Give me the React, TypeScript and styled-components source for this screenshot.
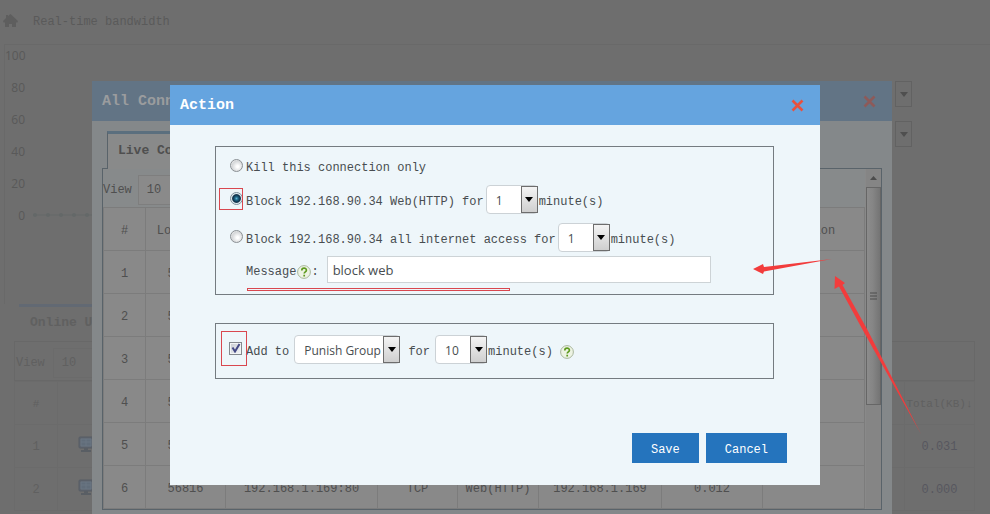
import React, { useState } from "react";
import styled, { createGlobalStyle, css } from "styled-components";

const MONO = '"Liberation Mono", "Courier New", monospace';
const SANS = '"Open Sans", "Noto Sans", sans-serif';

const GlobalStyle = createGlobalStyle`
  *, *::before, *::after { box-sizing: border-box; }
  body { margin: 0; background: #6e6e6e; font: 12px/16px ${MONO}; }
  button, input, select { font: inherit; color: inherit; }
`;

const Screen = styled.div`
  position: relative;
  height: 100vh;
  overflow: hidden;
  color: #606060;
`;

/* ---------- dashboard ---------- */

const Dashboard = styled.main`
  display: flex;
  flex-direction: column;
`;

const DashboardHeader = styled.header`
  display: flex;
  align-items: center;
  gap: 14px;
  height: 44px;
  padding-left: 2px;
`;

const DashboardTitle = styled.h1`
  margin: 0;
  font-size: 12px;
  font-weight: 400;
  line-height: 16px;
  color: #5a5a5a;
`;

const ChartCard = styled.section`
  display: flex;
  justify-content: space-between;
  height: 260px;
  margin-left: 4px;
  border-top: 1px solid #696969;
  border-left: 1px solid #696969;
`;

const Axis = styled.ol`
  display: flex;
  flex-direction: column;
  gap: 16px;
  width: 20px;
  margin: 3px 0 0;
  padding: 0;
  list-style: none;
  text-align: right;
  font-family: ${SANS};
  color: #595959;
`;

const Plot = styled.svg`
  flex: 1;
  height: 12px;
  margin: 164px 0 0 8px;
`;

const ChartFilters = styled.div`
  display: flex;
  flex-direction: column;
  gap: 14px;
  width: 95px;
  padding-top: 36px;
`;

const GhostButton = styled.button`
  width: 17px;
  height: 26px;
  padding: 0;
  color: #4f4f4f;
  background: #6e6e6e;
  border: 1px solid #626262;
  line-height: 0;
`;

const OnlineCard = styled.section`
  margin: 0 15px 0 14px;
`;

const DimTab = styled.h2`
  width: 180px;
  height: 37px;
  margin: 0 0 0 5px;
  padding: 8px 11px;
  border-top: 3px solid #626973;
  font-size: 13px;
  line-height: 16px;
`;

const DimToolbar = styled.div`
  display: flex;
  align-items: center;
  gap: 8px;
  height: 40px;
  padding: 4px 1px 0;
  border: 1px solid #686868;
`;

const DimTable = styled.table`
  width: 100%;
  table-layout: fixed;
  border-collapse: collapse;
  text-align: center;
  white-space: nowrap;

  th, td {
    height: 43px;
    padding: 2px 0 0;
    border: 1px solid #6b6b6b;
    font-weight: 400;
  }
  th { font-size: 11px; }
  td:last-child { color: #57575f; }
`;

const Col = styled.col<{ $w?: number }>`
  ${({ $w }) => $w && css`width: ${$w}px;`}
`;

/* ---------- modal windows ---------- */

const Layer = styled.div<{ $top: number; $right?: number }>`
  position: absolute;
  inset: 0;
  display: flex;
  justify-content: center;
  align-items: flex-start;
  padding: ${({ $top }) => $top}px ${({ $right }) => $right || 0}px 0 0;
`;

const Window = styled.section<{ $width: number; $dim?: boolean }>`
  position: relative;
  width: 100%;
  max-width: ${({ $width }) => $width}px;
  color: ${({ $dim }) => ($dim ? "#4f4f4f" : "#484d50")};
  background: ${({ $dim }) => ($dim ? "#84888a" : "#eef6fa")};
`;

const TitleBar = styled.header<{ $dim?: boolean }>`
  display: flex;
  align-items: center;
  justify-content: space-between;
  height: 40px;
  padding: 0 16px 0 10px;
  color: ${({ $dim }) => ($dim ? "#9a9c9e" : "#fff")};
  background: ${({ $dim }) => ($dim ? "#627485" : "#65a4df")};
`;

const WindowTitle = styled.h2`
  margin: 0;
  padding-top: 2px;
  font-size: 15px;
  line-height: 20px;
`;

const CloseButton = styled.button<{ $dim?: boolean }>`
  display: flex;
  padding: 0;
  border: 0;
  background: none;
  color: ${({ $dim }) => ($dim ? "#8d5a59" : "#e8513f")};
`;

const ConnectionsBody = styled.div`
  padding: 10px;
`;

const LiveTab = styled.h3`
  position: relative;
  width: 180px;
  height: 38px;
  margin: 0 0 -1px 5px;
  padding: 9px 10px;
  font-size: 13px;
  background: #898a8a;
  border: 1px solid #59636a;
  border-top: 3px solid #5b6f7e;
  border-bottom: 0;
`;

const LivePanel = styled.div`
  display: flex;
  border: 1px solid #59636a;
`;

const LiveContent = styled.div`
  flex: 1;
  padding-right: 1px;
  background: #898989;
`;

const LiveToolbar = styled.div`
  display: flex;
  align-items: center;
  gap: 6px;
  height: 38px;
  padding-top: 4px;
  background: #878a8b;
`;

const PageSize = styled.select<{ $faint?: boolean }>`
  appearance: none;
  width: 52px;
  height: 30px;
  padding: 0 8px;
  border: 1px solid ${({ $faint }) => ($faint ? "#6b6b6b" : "#7e7e7e")};
  background: ${({ $faint }) => ($faint ? "#6e6e6e" : "#8a8a8a")};
`;

const LiveTable = styled.table`
  width: 100%;
  table-layout: fixed;
  border-collapse: collapse;
  text-align: center;
  background: #898989;

  th, td {
    height: 43px;
    padding: 4px 0 0;
    border: 1px solid #7c7c7c;
    font-weight: 400;
  }
`;

const ScrollTrack = styled.div`
  display: flex;
  flex-direction: column;
  align-items: center;
  width: 15px;
  background: #858585;
  color: #4c4c4c;
`;

const ScrollUp = styled.button`
  width: 15px;
  height: 18px;
  padding: 0;
  border: 0;
  background: none;
  line-height: 0;
`;

const ScrollThumb = styled.div`
  display: flex;
  align-items: center;
  justify-content: center;
  width: 15px;
  height: 218px;
  border: 1px solid #666;
  background: linear-gradient(90deg, #8c8c8c, #858585 45%, #747474);
`;

/* ---------- action form ---------- */

const ActionForm = styled.form`
  padding: 21px 33px 22px 45px;
`;

const OptionGroup = styled.fieldset`
  display: flex;
  flex-direction: column;
  min-width: 0;
  margin: 0 13px 0 0;
  padding: 0 14px 11px;
  border: 1px solid #747b80;
`;

const PunishGroup = styled(OptionGroup)`
  margin-top: 28px;
  padding: 11px 13px 14px;
`;

const OptionRow = styled.div<{ $height: number; $after?: number }>`
  display: flex;
  align-items: center;
  height: ${({ $height }) => $height}px;
  margin-bottom: ${({ $after }) => $after || 0}px;
  white-space: pre;
`;

const Choice = styled.label`
  display: flex;
  align-items: center;
  gap: 4px;
`;

const Caption = styled.span`
  padding-top: 4px;
`;

const Marked = styled.span<{ $x: number; $top: number; $bottom: number }>`
  position: relative;
  display: flex;

  &::after {
    content: "";
    position: absolute;
    top: -${({ $top }) => $top}px;
    bottom: -${({ $bottom }) => $bottom}px;
    left: -${({ $x }) => $x}px;
    right: -${({ $x }) => ($x > 9 ? 1 : 5)}px;
    border: 1px solid #d9474f;
    pointer-events: none;
  }
`;

const Radio = styled.input`
  appearance: none;
  width: 13px;
  height: 13px;
  margin: 0 -1px 2px 0;
  border: 1px solid #8b9094;
  border-radius: 50%;
  background: radial-gradient(circle at 60% 60%, #fff 10%, #d4d6d8 60%, #f4f4f4 80%);

  &:checked {
    border-color: #7d8f9b;
    background: radial-gradient(circle at 50% 50%, #5fb4d6 0, #1c6384 22%, #0d2c45 50%, #dbe8ee 62%, #eef6fa 75%);
  }
`;

const Checkbox = styled.input`
  appearance: none;
  width: 13px;
  height: 13px;
  margin: 0 0 3px;
  border: 1px solid #84898e;
  background: linear-gradient(135deg, #c8ccd2, #f4f6f8);
  box-shadow: inset 0 0 0 1px #f3f5f6;
`;

const TickMark = styled.svg`
  position: absolute;
  top: 1px;
  left: 2px;
  pointer-events: none;
`;

const PickerFrame = styled.span<{ $width: number; $gap: number }>`
  position: relative;
  display: flex;
  width: ${({ $width }) => $width}px;
  height: 29px;
  margin: 0 1px 0 ${({ $gap }) => $gap}px;
`;

const PickerSelect = styled.select`
  appearance: none;
  width: 100%;
  padding: 2px 17px 0 9px;
  border: 1px solid #ccd2d6;
  border-radius: 4px;
  background: #fff;
  font-family: ${SANS};
  font-size: 12px;
`;

const PickerArrow = styled.span`
  position: absolute;
  inset: 1px 0 1px auto;
  display: flex;
  align-items: center;
  justify-content: center;
  width: 17px;
  border: 1px solid #6d6d6d;
  background: linear-gradient(#f4f4f4, #cfcfcf);
  color: #000;
  pointer-events: none;
`;

const MessageRow = styled.div`
  position: relative;
  display: flex;
  align-items: center;
  padding-left: 16px;
`;

const MessageInput = styled.input`
  flex: 0 1 384px;
  min-width: 0;
  height: 27px;
  margin-left: 8px;
  padding: 0 5px;
  border: 1px solid #cdd3d6;
  background: #fff;
  font-family: ${SANS};
  font-size: 13px;
`;

const MessageUnderline = styled.span`
  position: absolute;
  left: 17px;
  top: 32px;
  width: 263px;
  height: 3px;
  border: 1px solid #d9474f;
`;

const HelpButton = styled.button<{ $gap: number }>`
  display: flex;
  margin: 5px 0 0 ${({ $gap }) => $gap}px;
  padding: 0;
  border: 0;
  background: none;
`;

const ButtonBar = styled.footer`
  display: flex;
  justify-content: flex-end;
  gap: 7px;
  margin-top: 54px;
`;

const ActionButton = styled.button`
  height: 30px;
  padding: 3px 19px 0;
  border: 0;
  background: #2574bd;
  color: #fff;
`;

const Arrows = styled.svg`
  position: absolute;
  top: 165px;
  left: 580px;
  overflow: visible;
  pointer-events: none;
`;

/* ---------- drawings ---------- */

const Caret = () => (
  <svg width="8" height="5" viewBox="0 0 8 5" aria-hidden="true">
    <path d="M0 0h8L4 5z" fill="currentColor" />
  </svg>
);

const Cross = () => (
  <svg width="13" height="13" viewBox="0 0 13 13" aria-hidden="true">
    <path d="M1.500 1.500l10 10M11.500 1.500l-10 10" stroke="currentColor" strokeWidth="2.600" />
  </svg>
);

const Home = () => (
  <svg width="17" height="16" viewBox="0 0 17 16" aria-hidden="true">
    <path d="M8.500 0L16 7l-1 2-1-1v5h-4v-3H7v3H3V8l-1 1-1-2 3-3V1h2v1z" fill="#5e5e5e" />
  </svg>
);

const Computer = () => (
  <svg width="16" height="17" viewBox="0 0 16 17" aria-hidden="true">
    <rect x="1" y="1" width="14" height="11" rx="1" fill="#5e656e" stroke="#575d65" />
    <path d="M3 3h10v7H3zM8 3v7M3 6h10" fill="#616d7a" stroke="#6b7682" />
    <path d="M6 12h4v2h3v2H3v-2h3z" fill="#595e64" />
  </svg>
);

const HelpIcon = () => (
  <svg width="14" height="14" viewBox="0 0 14 14" aria-hidden="true">
    <circle cx="7" cy="7" r="6.400" fill="#edf3e3" stroke="#a9b79c" />
    <path d="M4.800 5.400c0-3 4.600-2.900 4.600-.2 0 1.700-2.200 1.600-2.200 3.400M7.200 9.800v1.700" fill="none" stroke="#5d9a1f" strokeWidth="1.700" />
  </svg>
);

function Help({ gap }: { gap: number }) {
  return (
    <HelpButton type="button" $gap={gap} aria-label="Help">
      <HelpIcon />
    </HelpButton>
  );
}

type PickerProps = { label: string; width: number; gap: number; options: string[] };

function Picker({ label, width, gap, options }: PickerProps) {
  return (
    <PickerFrame $width={width} $gap={gap}>
      <PickerSelect aria-label={label}>
        {options.map((option) => (
          <option key={option}>{option}</option>
        ))}
      </PickerSelect>
      <PickerArrow>
        <Caret />
      </PickerArrow>
    </PickerFrame>
  );
}

/* ---------- sections ---------- */

function DashboardView() {
  return (
    <Dashboard>
      <DashboardHeader>
        <Home />
        <DashboardTitle>Real-time bandwidth</DashboardTitle>
      </DashboardHeader>
      <ChartCard>
        <Axis>
          {[100, 80, 60, 40, 20, 0].map((tick) => (
            <li key={tick}>{tick}</li>
          ))}
        </Axis>
        <Plot aria-hidden="true">
          <path d="M0 6H300" stroke="#646868" />
          {[2, 15, 28, 41, 54].map((x) => (
            <circle key={x} cx={x} cy="6" r="2" fill="#646868" />
          ))}
        </Plot>
        <ChartFilters>
          <GhostButton aria-label="Interface">
            <Caret />
          </GhostButton>
          <GhostButton aria-label="Period">
            <Caret />
          </GhostButton>
        </ChartFilters>
      </ChartCard>
      <OnlineCard>
        <DimTab>Online Users</DimTab>
        <DimToolbar>
          <label htmlFor="online-size">View</label>
          <PageSize id="online-size" $faint>
            <option>10</option>
          </PageSize>
        </DimToolbar>
        <DimTable>
          <colgroup>
            <Col $w={43} />
            <Col $w={56} />
            <Col />
            <Col $w={70} />
          </colgroup>
          <thead>
            <tr>
              <th>#</th>
              <th />
              <th />
              <th>Total(KB)↓</th>
            </tr>
          </thead>
          <tbody>
            {["0.031", "0.000"].map((total, i) => (
              <tr key={total}>
                <td>{i + 1}</td>
                <td>
                  <Computer />
                </td>
                <td />
                <td>{total}</td>
              </tr>
            ))}
          </tbody>
        </DimTable>
      </OnlineCard>
    </Dashboard>
  );
}

const CONNECTION = ["56816", "192.168.1.169:80", "TCP", "Web(HTTP)", "192.168.1.169", "0.012", ""];

function ConnectionsWindow() {
  return (
    <Window $width={800} $dim>
      <TitleBar $dim>
        <WindowTitle>All Connections</WindowTitle>
        <CloseButton $dim aria-label="Close connections">
          <Cross />
        </CloseButton>
      </TitleBar>
      <ConnectionsBody>
        <LiveTab>Live Connections</LiveTab>
        <LivePanel>
          <LiveContent>
            <LiveToolbar>
              <label htmlFor="live-size">View</label>
              <PageSize id="live-size">
                <option>10</option>
              </PageSize>
            </LiveToolbar>
            <LiveTable>
              <colgroup>
                <Col $w={42} />
                <Col $w={80} />
                <Col $w={152} />
                <Col $w={80} />
                <Col $w={81} />
                <Col $w={123} />
                <Col $w={101} />
                <Col />
              </colgroup>
              <thead>
                <tr>
                  {["#", "Loc Port", "Remote", "Protocol", "Service", "Host", "Total", "Action"].map((head) => (
                    <th key={head}>{head}</th>
                  ))}
                </tr>
              </thead>
              <tbody>
                {[1, 2, 3, 4, 5, 6].map((row) => (
                  <tr key={row}>
                    <td>{row}</td>
                    {CONNECTION.map((cell, i) => (
                      <td key={i}>{cell}</td>
                    ))}
                  </tr>
                ))}
              </tbody>
            </LiveTable>
          </LiveContent>
          <ScrollTrack>
            <ScrollUp aria-label="Scroll up">
              <svg width="7" height="4" viewBox="0 0 7 4" aria-hidden="true">
                <path d="M0 4h7L3.500 0z" fill="currentColor" />
              </svg>
            </ScrollUp>
            <ScrollThumb>
              <svg width="7" height="8" viewBox="0 0 7 8" aria-hidden="true">
                <path d="M0 1h7M0 4h7M0 7h7" stroke="currentColor" />
              </svg>
            </ScrollThumb>
          </ScrollTrack>
        </LivePanel>
      </ConnectionsBody>
    </Window>
  );
}

function ActionWindow() {
  const [mode, setMode] = useState("web");
  const [punish, setPunish] = useState(true);
  const radio = (value: string) => (
    <Radio type="radio" name="mode" checked={mode === value} onChange={() => setMode(value)} />
  );

  return (
    <Window $width={650} role="dialog" aria-labelledby="action-title">
      <TitleBar>
        <WindowTitle id="action-title">Action</WindowTitle>
        <CloseButton aria-label="Close">
          <Cross />
        </CloseButton>
      </TitleBar>
      <ActionForm onSubmit={(event) => event.preventDefault()}>
        <OptionGroup>
          <OptionRow $height={38}>
            <Choice>
              {radio("kill")}
              <Caption>Kill this connection only</Caption>
            </Choice>
          </OptionRow>
          <OptionRow $height={29} $after={9}>
            <Choice>
              <Marked $x={11} $top={4} $bottom={3}>
                {radio("web")}
              </Marked>
              <Caption>Block 192.168.90.34 Web(HTTP) for</Caption>
            </Choice>
            <Picker label="Web block minutes" width={52} gap={2} options={["1", "5", "10"]} />
            <Caption>minute(s)</Caption>
          </OptionRow>
          <OptionRow $height={29} $after={4}>
            <Choice>
              {radio("all")}
              <Caption>Block 192.168.90.34 all internet access for</Caption>
            </Choice>
            <Picker label="Internet block minutes" width={52} gap={2} options={["1", "5", "10"]} />
            <Caption>minute(s)</Caption>
          </OptionRow>
          <MessageRow>
            <Caption as="label" htmlFor="message">
              Message
            </Caption>
            <Help gap={1} />
            <Caption>:</Caption>
            <MessageInput id="message" defaultValue="block web" />
            <MessageUnderline />
          </MessageRow>
        </OptionGroup>
        <PunishGroup>
          <OptionRow $height={29}>
            <Choice>
              <Marked $x={8} $top={11} $bottom={8}>
                <Checkbox type="checkbox" checked={punish} onChange={() => setPunish(!punish)} />
                {punish && (
                  <TickMark width="10" height="10" viewBox="0 0 10 10" aria-hidden="true">
                    <path d="M1.500 4.500l2.500 4L8.500 1" fill="none" stroke="#454a86" strokeWidth="2" />
                  </TickMark>
                )}
              </Marked>
              <Caption>Add to</Caption>
            </Choice>
            <Picker label="Group" width={106} gap={5} options={["Punish Group"]} />
            <Caption>{" for"}</Caption>
            <Picker label="Group minutes" width={52} gap={5} options={["10", "20", "30"]} />
            <Caption>minute(s)</Caption>
            <Help gap={7} />
          </OptionRow>
        </PunishGroup>
        <ButtonBar>
          <ActionButton type="submit">Save</ActionButton>
          <ActionButton type="button">Cancel</ActionButton>
        </ButtonBar>
      </ActionForm>
      <Arrows width="175" height="190" viewBox="0 0 175 190" aria-hidden="true">
        <path d="M82 9L14 21.500 13 24 3 19 13 14 14 17zM85 26L95 33 92.500 35 117 79 171 184 113 80.500 89 36.500 84.500 39z" fill="#f23c3c" />
      </Arrows>
    </Window>
  );
}

export default function App() {
  return (
    <Screen>
      <GlobalStyle />
      <DashboardView />
      <Layer $top={81} $right={6}>
        <ConnectionsWindow />
      </Layer>
      <Layer $top={85}>
        <ActionWindow />
      </Layer>
    </Screen>
  );
}
